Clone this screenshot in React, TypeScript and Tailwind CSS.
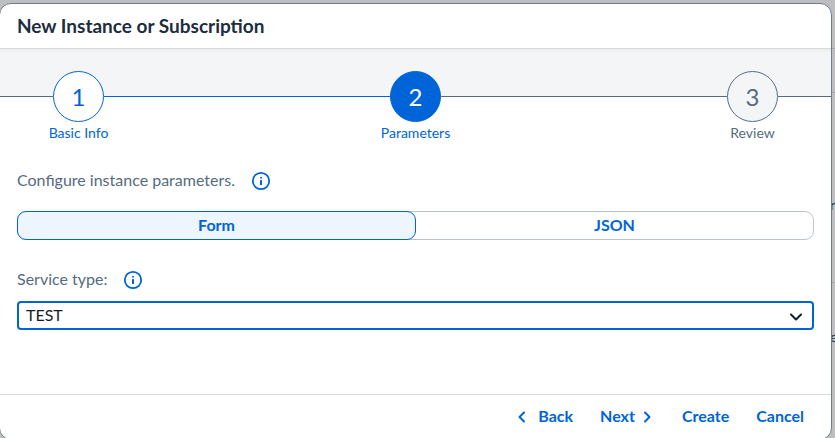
import type { ReactNode } from 'react';

function InfoIcon() {
  return (
    <svg width="20" height="20" viewBox="0 0 20 20" fill="none" aria-hidden="true">
      <circle cx="10" cy="10" r="8.2" stroke="currentColor" strokeWidth="1.8" />
      <rect x="9" y="9" width="2" height="5" rx="0.5" fill="currentColor" />
      <rect x="9" y="6" width="2" height="1.6" rx="0.5" fill="currentColor" />
    </svg>
  );
}

function Chevron({ d, className = '' }: { d: string; className?: string }) {
  return (
    <svg width="16" height="16" viewBox="0 0 16 16" fill="none" className={className} aria-hidden="true">
      <path d={d} stroke="currentColor" strokeWidth="2" strokeLinecap="round" strokeLinejoin="round" />
    </svg>
  );
}

function Step({ number, label, circle, text }: { number: number; label: string; circle: string; text: string }) {
  return (
    <li className="flex w-[51px] flex-none flex-col items-center pt-[22px]">
      <span className={`flex size-[51px] flex-none items-center justify-center rounded-full border text-2xl ${circle}`}>
        {number}
      </span>
      <span className={`mt-[3px] text-sm leading-4 whitespace-nowrap ${text}`}>{label}</span>
    </li>
  );
}

function FooterButton({ children, className = '' }: { children: ReactNode; className?: string }) {
  return (
    <button type="button" className={`flex h-7 items-center pb-0.5 text-base font-bold text-[#0064d9] ${className}`}>
      {children}
    </button>
  );
}

export default function App() {
  return (
    <div className="relative flex h-screen flex-col overflow-hidden bg-[#bdbec0] pt-[3px] pr-[3px] font-['Lato','Liberation_Sans',sans-serif]">
      <div aria-hidden="true" className="absolute inset-y-0 right-0 w-[5px] overflow-hidden text-sm text-[#2a3746]">
        <span className="absolute top-12 h-px w-full bg-[#a5a7aa]" />
        <span className="absolute top-[92px] h-px w-full bg-[#a5a7aa]" />
        <span className="absolute top-[195px] left-0">r</span>
        <span className="absolute top-[282px] h-px w-full bg-[#a5a7aa]" />
        <span className="absolute top-[327px] left-0">e</span>
      </div>

      <section
        role="dialog"
        aria-labelledby="dialog-title"
        className="relative -mb-0.5 -ml-px flex flex-1 flex-col overflow-hidden rounded-xl border border-[#6f7d8c] bg-white"
      >
        <header className="flex h-[45px] flex-none items-center border-b border-[#d9d9d9] px-[17px]">
          <h1 id="dialog-title" className="text-[19px] leading-6 font-bold text-[#1d2d3e]">New Instance or Subscription</h1>
        </header>

        <ol className="flex flex-none bg-[linear-gradient(to_bottom,#ededee_0px,#f4f5f7_4px,#f4f5f7_47px,#ffffff_47px)]">
          <li aria-hidden="true" className="mt-[47px] h-px w-[53px] bg-[#556b82]" />
          <Step number={1} label="Basic Info" circle="border-[#0064d9] bg-white text-[#0064d9]" text="text-[#0064d9]" />
          <li aria-hidden="true" className="mt-[47px] h-px flex-1 bg-[#0064d9]" />
          <Step number={2} label="Parameters" circle="border-[#0064d9] bg-[#0064d9] text-white" text="text-[#0064d9]" />
          <li aria-hidden="true" className="mt-[47px] h-px flex-1 bg-[#556b82]" />
          <Step number={3} label="Review" circle="border-[#556b82] bg-[#f4f5f7] text-[#556b82]" text="text-[#556b82]" />
          <li aria-hidden="true" className="mt-[47px] h-px w-[53px] bg-[#556b82]" />
        </ol>

        <main className="flex flex-1 flex-col px-[17px] pt-[30px]">
          <div className="flex h-5 items-center gap-4">
            <p className="pb-0.5 text-base leading-5 text-[#556b82]">Configure instance parameters.</p>
            <button type="button" aria-label="About instance parameters" className="text-[#0064d9]"><InfoIcon /></button>
          </div>

          <div className="mt-5 flex h-[29px] rounded-[9px] border border-[#bcc3ca]">
            <button type="button" aria-pressed="true" className="-my-px -ml-px flex-1 rounded-[9px] border border-[#0064d9] bg-[#edf6ff] pb-0.5 text-base leading-5 font-bold text-[#0064d9]">
              Form
            </button>
            <button type="button" aria-pressed="false" className="flex-1 pb-0.5 text-base leading-5 font-bold text-[#0064d9]">
              JSON
            </button>
          </div>

          <div className="mt-[30px] flex h-5 items-center gap-4">
            <label htmlFor="service-type" className="pb-0.5 text-base leading-5 text-[#556b82]">Service type:</label>
            <button type="button" aria-label="About service type" className="text-[#0064d9]"><InfoIcon /></button>
          </div>

          <div className="relative mt-[11px]">
            <select id="service-type" defaultValue="TEST" className="block h-[29px] w-full appearance-none rounded-[4px] border-2 border-[#0064d9] bg-white px-[7px] pb-0.5 text-base leading-5 text-[#131e29] outline-none">
              <option>TEST</option>
            </select>
            <Chevron d="M3 5.5 L8 10.5 L13 5.5" className="pointer-events-none absolute top-2 right-2.5 text-[#131e29]" />
          </div>
        </main>

        <footer className="flex h-[45px] flex-none items-center justify-end border-t border-[#d9d9d9] pr-[27px]">
          <FooterButton className="gap-2">
            <Chevron d="M10 4.5 L5.5 9 L10 13.5" />
            Back
          </FooterButton>
          <FooterButton className="ml-[27px] gap-1">
            Next
            <Chevron d="M6 4.5 L10.5 9 L6 13.5" />
          </FooterButton>
          <FooterButton className="ml-[27px]">Create</FooterButton>
          <FooterButton className="ml-[27px]">Cancel</FooterButton>
        </footer>
      </section>
    </div>
  );
}
